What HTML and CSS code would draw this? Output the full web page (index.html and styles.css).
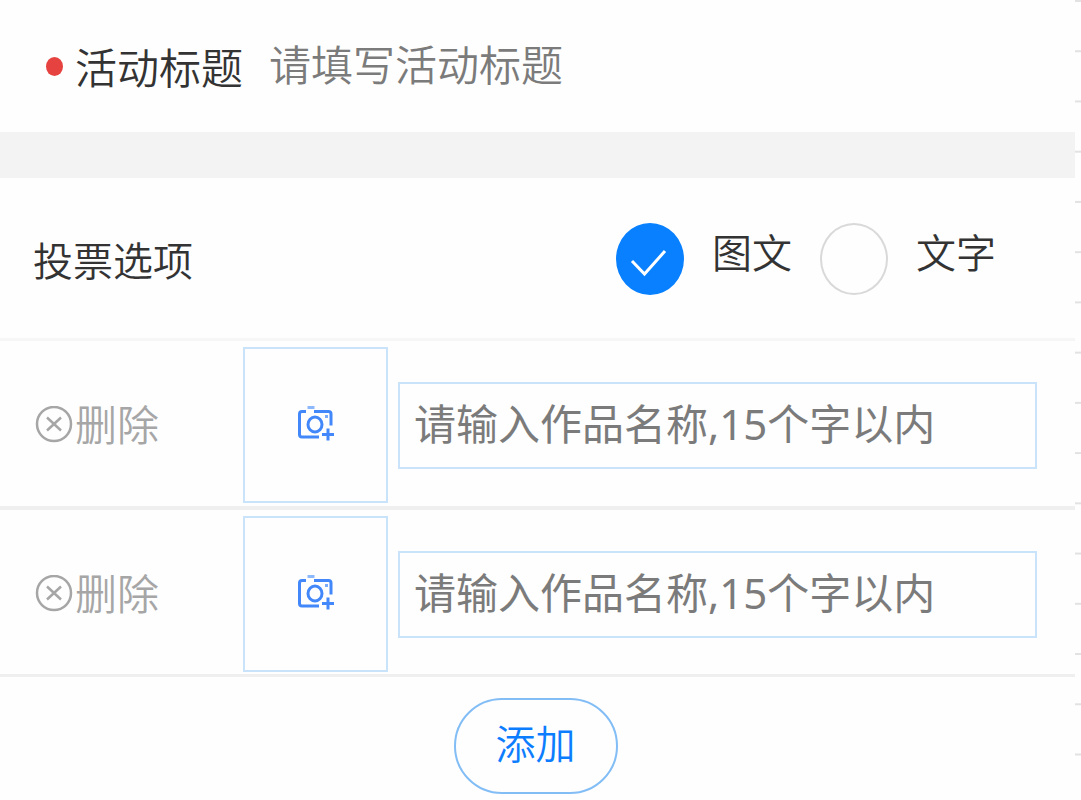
FILE: index.html
```html
<!DOCTYPE html>
<html lang="zh-CN">
<head>
<meta charset="utf-8">
<meta name="viewport" content="width=device-width, initial-scale=1">
<title>投票活动</title>
<link rel="stylesheet" href="styles.css">
</head>
<body>
<svg class="sprite" aria-hidden="true">
  <symbol id="icon-close" viewBox="0 0 38 38">
    <circle cx="19" cy="18" r="17"/>
    <path d="M12 11.500l14 13M26 11.500l-14 13"/>
  </symbol>
  <symbol id="icon-camera" viewBox="0 0 38 38">
    <path d="M9 5.500H5Q2.500 5.500 2.500 8V28.500Q2.500 31 5 31H22M17 5.500H31.500Q34 5.500 34 8V19.500"/>
    <path class="cap" d="M10.500 1.500h7"/>
    <ellipse cx="18" cy="18.500" rx="7" ry="7.500"/>
    <path d="M31 22.500v12M25 28.500h12"/>
    <path class="dot" d="M28 10.500h3"/>
  </symbol>
</svg>
<form class="page">
  <main class="content">
    <div class="title-row">
      <span class="required"></span>
      <label class="title-label" for="title">活动标题</label>
      <input class="title-input" id="title" type="text" placeholder="请填写活动标题">
    </div>
    <fieldset class="type-row">
      <div class="type-inner">
        <span class="type-name">投票选项</span>
        <label class="choice">
          <span class="choice-mark">
            <input class="radio" type="radio" name="type" checked>
            <svg class="tick" viewBox="0 0 68 72" aria-hidden="true"><path d="M16 38L28.500 51L49 28"/></svg>
          </span>
          图文
        </label>
        <label class="choice">
          <span class="choice-mark"><input class="radio" type="radio" name="type"></span>
          文字
        </label>
      </div>
    </fieldset>
    <div class="option">
      <button class="delete" type="button"><svg class="icon"><use href="#icon-close"/></svg>删除</button>
      <button class="upload" type="button" aria-label="上传图片"><svg class="icon"><use href="#icon-camera"/></svg></button>
      <input class="option-name" type="text" aria-label="作品名称" placeholder="请输入作品名称,15个字以内">
    </div>
    <div class="option">
      <button class="delete" type="button"><svg class="icon"><use href="#icon-close"/></svg>删除</button>
      <button class="upload" type="button" aria-label="上传图片"><svg class="icon"><use href="#icon-camera"/></svg></button>
      <input class="option-name" type="text" aria-label="作品名称" placeholder="请输入作品名称,15个字以内">
    </div>
    <div class="actions"><button class="add" type="button">添加</button></div>
  </main>
  <div class="ruler"></div>
</form>
</body>
</html>
```
FILE: styles.css
```css
* { box-sizing: border-box; }

body {
  margin: 0;
  background: #fefefe;
  color: #333;
  font: 350 42px/60px "Noto Sans", "Noto Sans CJK SC", sans-serif;
}

button, input { font: inherit; color: inherit; }
button { background: none; border: 0; padding: 0; cursor: pointer; }
.sprite { display: none; }

.page { display: flex; min-height: 100vh; }
.content { flex: 1; min-width: 0; }

.ruler {
  width: 6px;
  background: linear-gradient(#e2e2e2 2px, transparent 2px) 0 0 / 100% 6.28%;
}

.title-row {
  display: flex;
  align-items: center;
  height: 132px;
  padding: 0 38px 0 46px;
}
.required { width: 17px; height: 19px; border-radius: 50%; background: #e64340; }
.title-label { margin: 4px 26px 0 12px; }
.title-input { flex: 1; min-width: 0; border: 0; padding: 0 0 2px; background: none; }
::placeholder { color: #7b7b7b; opacity: 1; }

.type-row {
  margin: 0;
  padding: 0;
  border: 0;
  border-top: 46px solid #f3f3f3;
  border-bottom: 3px solid #f6f6f6;
}
.type-inner {
  display: flex;
  align-items: center;
  height: 160px;
  padding: 2px 79px 0 33px;
  font-size: 40px;
}
.type-name { flex: 1; padding-top: 3px; }
.choice { display: flex; align-items: flex-start; gap: 28px; margin-left: 28px; }
.choice-mark { display: grid; }
.radio, .tick { grid-area: 1 / 1; width: 68px; height: 72px; }
.radio {
  appearance: none;
  margin: 0;
  border: 2px solid #d9d9d9;
  border-radius: 50%;
}
.radio:checked { background: #0880ff; border-color: #0880ff; }
.tick { fill: none; stroke: #fff; stroke-width: 3; pointer-events: none; }

.option {
  display: flex;
  align-items: center;
  padding: 6px 38px 3px 35px;
  border-bottom: 4px solid #efefef;
}
.option + .option { padding-bottom: 2px; border-bottom-width: 3px; }
.icon { width: 38px; height: 38px; fill: none; stroke: currentColor; stroke-width: 3; }
.delete {
  display: flex;
  align-items: center;
  gap: 2px;
  width: 208px;
  color: #a6a6a6;
}
.delete .icon { stroke-width: 2.5; }
.upload {
  display: grid;
  place-items: center;
  width: 145px;
  height: 156px;
  margin-right: 10px;
  border: 2px solid #c9e4fa;
  color: #4388fa;
}
.cap { opacity: 0.6; }
.dot { opacity: 0.7; }
.option-name {
  flex: 1;
  min-width: 0;
  height: 87px;
  padding: 0 14px 4px;
  border: 2px solid #c9e4fa;
  background: none;
  font-weight: 400;
}

.actions { display: flex; justify-content: center; padding: 21px 4px 6px 0; }
.add {
  width: 164px;
  height: 96px;
  padding-bottom: 4px;
  border: 2px solid #82bdf5;
  border-radius: 48px;
  color: #0d7dff;
  font-size: 40px;
}
```
